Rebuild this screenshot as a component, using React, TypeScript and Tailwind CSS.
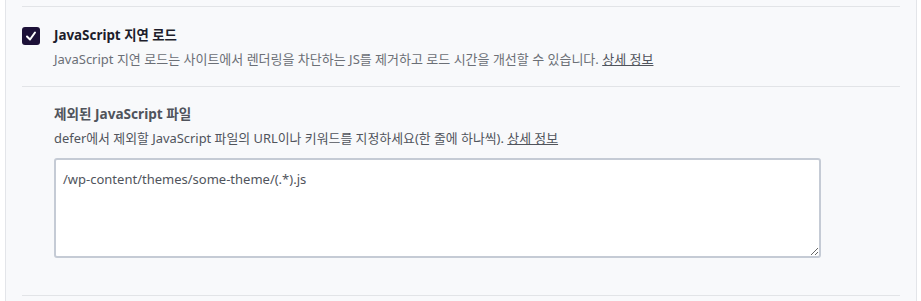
const CheckIcon = () => (
  <svg className="h-3 w-3" viewBox="0 0 24 24" fill="none" stroke="white" strokeWidth="4" strokeLinecap="round" strokeLinejoin="round">
    <polyline points="4 13 10 19 20 5" />
  </svg>
)

export default function App() {
  return (
    <div className="h-[301px] bg-white pl-[5px] font-['Noto_Sans','Noto_Sans_CJK_KR',sans-serif]">
      <div className="h-full w-[912px] border-x border-[#e3e5e9] bg-[#f8f9fb] px-4 pt-[6px]">
        {/* 지연 로드 */}
        <div className="flex gap-[14px] border-t border-[#e2e4e7] pt-[18px] pb-[17px]">
          <div className="mt-[2px] flex h-[18px] w-[18px] shrink-0 items-center justify-center rounded-[3px] bg-[#1d1138]">
            <CheckIcon />
          </div>
          <div>
            <p className="text-[13.4px] leading-5 font-bold text-[#1d1d2b]">JavaScript 지연 로드</p>
            <p className="mt-1 text-[13px] leading-5 text-[#6b6f76]">
              JavaScript 지연 로드는 사이트에서 렌더링을 차단하는 JS를 제거하고 로드 시간을 개선할 수 있습니다.{" "}
              <a className="text-[#50545c] underline">상세 정보</a>
            </p>
          </div>
        </div>

        {/* 제외 파일 */}
        <div className="border-y border-[#e2e4e7] pt-[17px] pb-[37px] pl-8">
          <p className="text-[13.6px] leading-5 font-bold text-[#50545c]">제외된 JavaScript 파일</p>
          <p className="mt-1 text-[12.9px] leading-5 text-[#50545c]">
            defer에서 제외할 JavaScript 파일의 URL이나 키워드를 지정하세요(한 줄에 하나씩).{" "}
            <a className="underline">상세 정보</a>
          </p>
          <textarea
            className="mt-[10px] block h-[100px] w-[767px] rounded-[3px] border-2 border-[#c5cbd5] bg-white px-[7px] pt-[9px] text-[13px] leading-5 text-[#50545c] outline-none"
            defaultValue="/wp-content/themes/some-theme/(.*).js"
          />
        </div>
      </div>
    </div>
  )
}
